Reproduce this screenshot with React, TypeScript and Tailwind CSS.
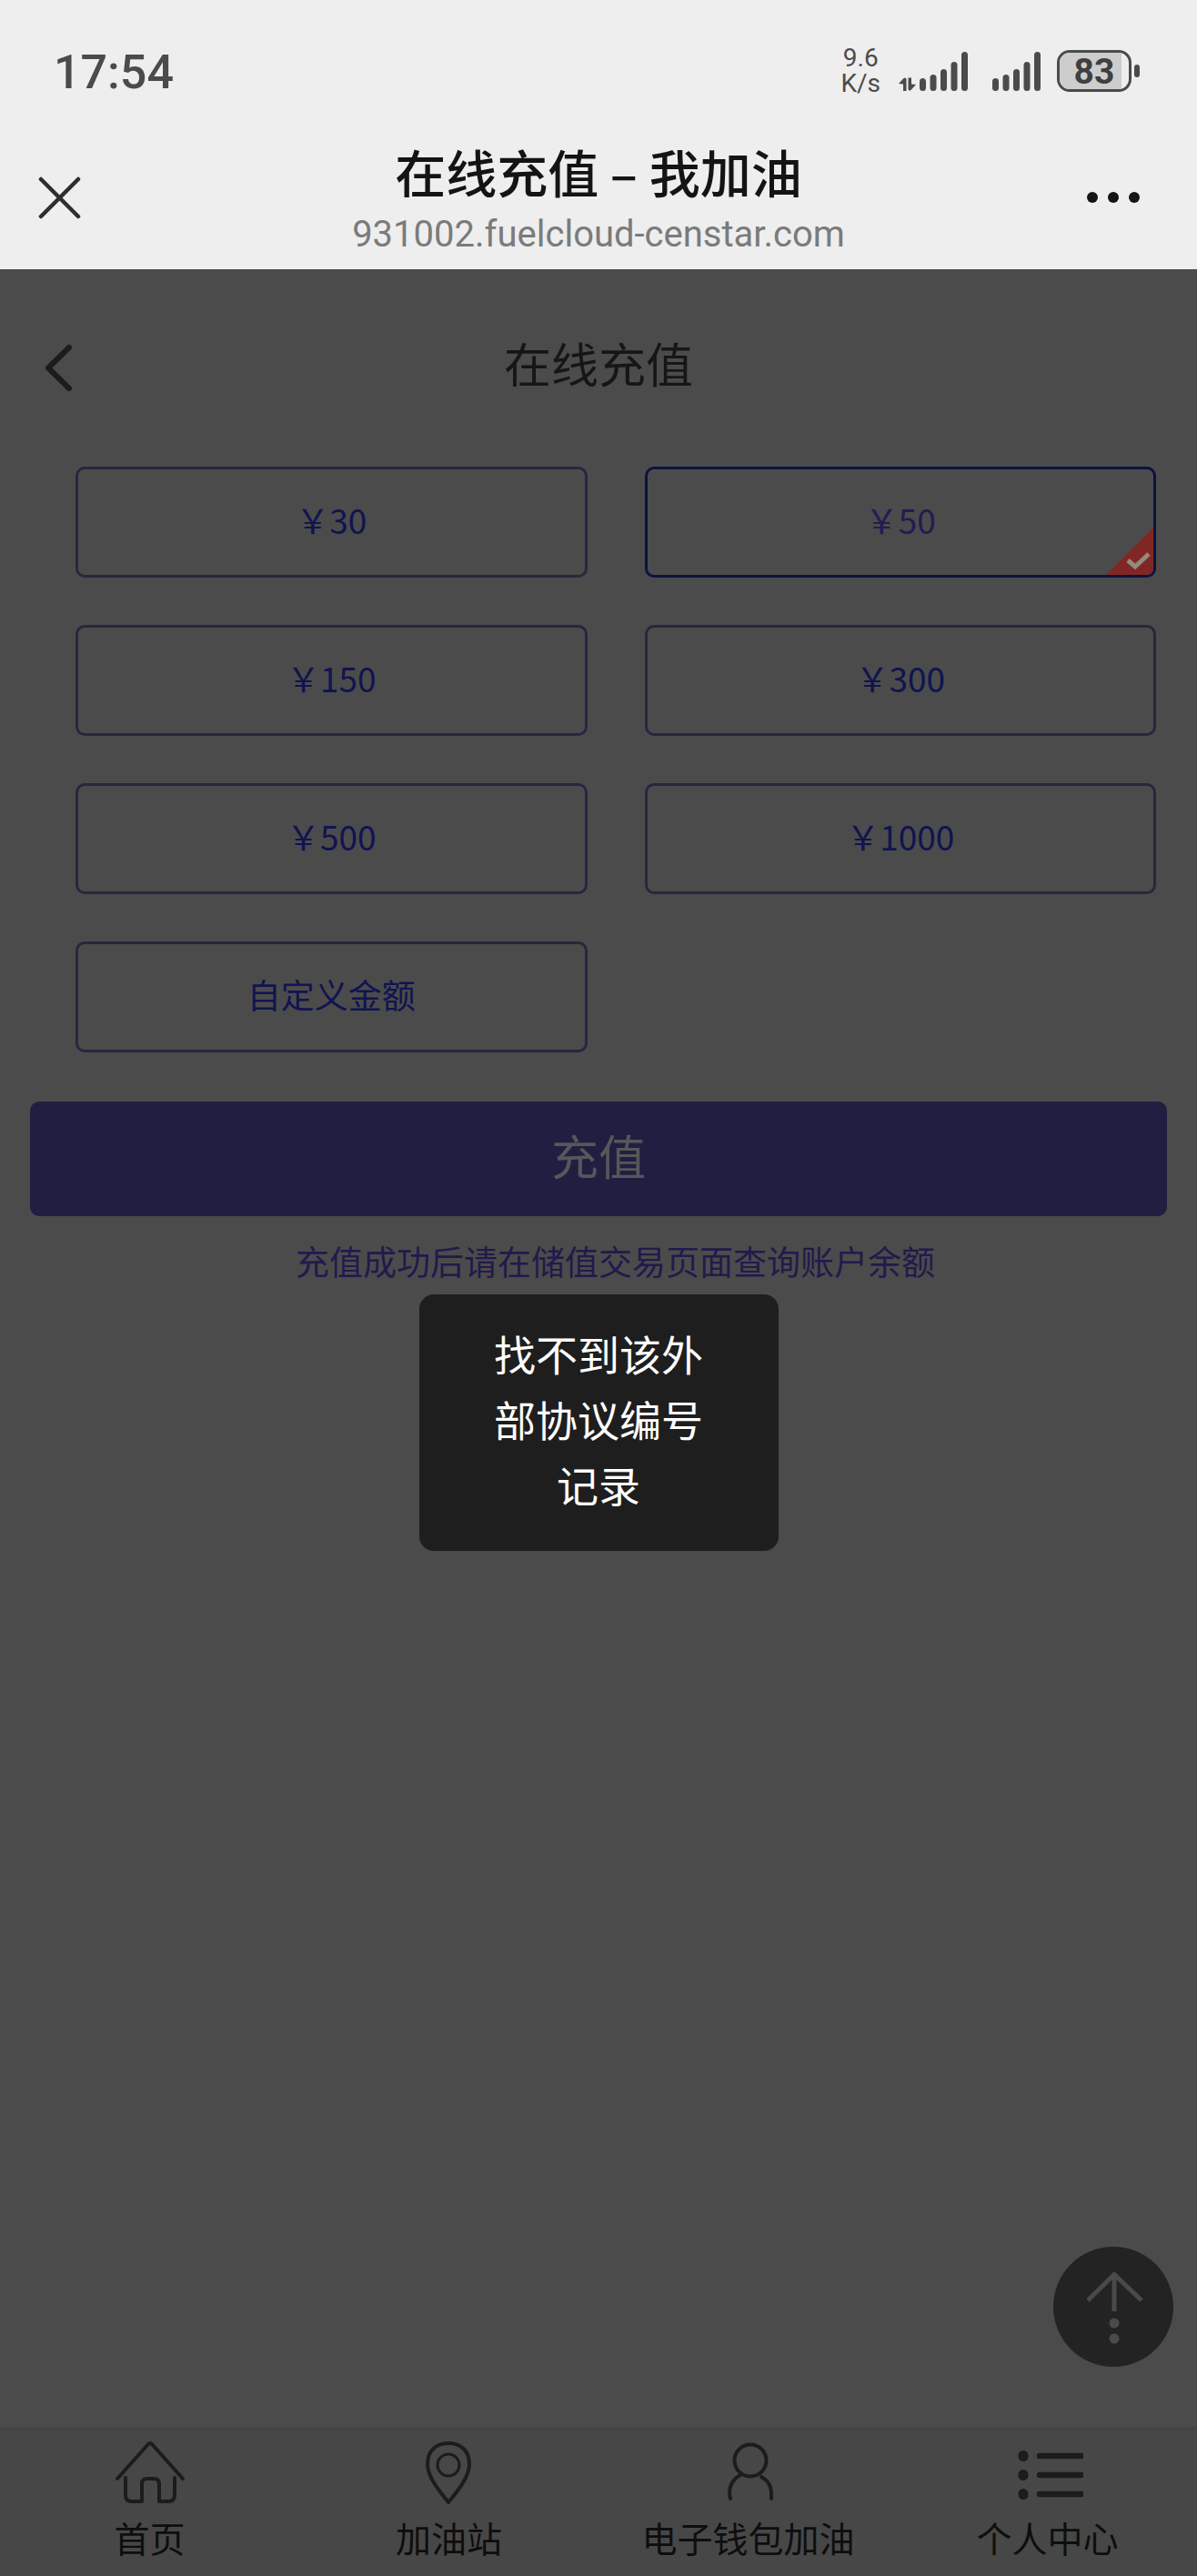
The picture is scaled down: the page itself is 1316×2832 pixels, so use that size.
import { useState } from 'react';
import clsx from 'clsx';

const amounts = ['￥30', '￥50', '￥150', '￥300', '￥500', '￥1000', '自定义金额'];

function SignalBars({ data = false }: { data?: boolean }) {
	return (
		<svg className={clsx('h-[43px]', data ? 'w-[76px]' : 'w-[53px]')} viewBox={data ? '-23 0 76 43' : '0 0 53 43'} fill="#4b4b4b">
			{data && (
				<>
					<path d="M-23 35 L-17.500 29 Q-15 27.500 -14.500 30 V43 H-18 V35.500 z" />
					<path d="M-4 36 L-9.500 42 Q-12 43.500 -12.500 41 V28.500 H-9 V35.500 z" />
				</>
			)}
			<rect x="0" y="29" width="7" height="14" rx="3.500" />
			<rect x="11.500" y="25" width="7" height="18" rx="3.500" />
			<rect x="23" y="19" width="7" height="24" rx="3.500" />
			<rect x="34.500" y="11" width="7" height="32" rx="3.500" />
			<rect x="46" y="0" width="7" height="43" rx="3.500" />
		</svg>
	);
}

function Battery({ level }: { level: number }) {
	return (
		<div className="flex items-center gap-[3px]">
			<div className="relative h-[46px] w-[82px] overflow-hidden rounded-[14px] border-[3px] border-[#4b4b4b]">
				<div className="h-full bg-[#cdcdcd]" style={{ width: `${level + 6}%` }} />
				<span className="absolute inset-0 flex items-center justify-center pt-0.5 text-[39px] font-bold leading-none text-[#3f3f3f]">
					{level}
				</span>
			</div>
			<div className="h-[14px] w-[6px] rounded-full bg-[#4b4b4b]" />
		</div>
	);
}

function StatusBar() {
	return (
		<div className="flex h-[156px] items-center justify-between pl-[59px] pr-[63px] font-['Roboto',sans-serif] text-[#4b4b4b]">
			<span className="pt-1 text-[52px] font-medium leading-none">17:54</span>
			<div className="flex items-center">
				<div className="mr-[20px] text-center text-[28px] leading-[28px]">
					<div>9.6</div>
					<div>K/s</div>
				</div>
				<SignalBars data />
				<div className="w-[27px]" />
				<SignalBars />
				<div className="w-[18px]" />
				<Battery level={83} />
			</div>
		</div>
	);
}

function BrowserHeader() {
	return (
		<header className="grid h-[140px] grid-cols-[1fr_auto_1fr] items-start pl-[42px] pr-[62px]">
			<button type="button" aria-label="关闭" className="mt-[38px] w-[54px]">
				<svg className="size-[47px]" viewBox="0 0 47 47" fill="none" stroke="#2e2e2e" strokeWidth="4.500" strokeLinecap="round">
					<path d="M3 3 L44 44 M44 3 L3 44" />
				</svg>
			</button>
			<div className="pl-5 text-center">
				<h1 className="text-[56px] font-medium leading-[64px] text-[#141414]">在线充值 – 我加油</h1>
				<p className="pt-1.5 font-['Roboto',sans-serif] text-[40px] leading-[64px] text-[#7b7b7b]">931002.fuelcloud-censtar.com</p>
			</div>
			<button type="button" aria-label="更多" className="mt-[55px] w-[60px] justify-self-end">
				<svg className="h-[12px] w-[60px]" viewBox="0 0 60 12" fill="#141414">
					<circle cx="7" cy="6" r="6" />
					<circle cx="30" cy="6" r="6" />
					<circle cx="53" cy="6" r="6" />
				</svg>
			</button>
		</header>
	);
}

function CheckedCorner() {
	return (
		<svg className="absolute bottom-0 right-0 size-[52px]" viewBox="0 0 52 52">
			<path d="M52 0 V52 H0 z" fill="#802725" />
			<path d="M24 36 L32 43 L47 29" fill="none" stroke="#94897c" strokeWidth="5" />
		</svg>
	);
}

const iconProps = {
	fill: 'none',
	stroke: '#1c1c1c',
	strokeWidth: 4,
	strokeLinecap: 'round',
	strokeLinejoin: 'round',
} as const;

const tabs = [
	{
		label: '首页',
		icon: (
			<svg className="h-[72px] w-[78px]" viewBox="0 0 78 72" {...iconProps}>
				<path d="M3 43 L37 5 Q39 3 41 5 L75 43" />
				<path d="M12 42 V61 Q12 68 19 68 H30 V49 Q30 43 36 43 H43 Q49 43 49 49 V68 H59 Q66 68 66 61 V42" />
			</svg>
		),
	},
	{
		label: '加油站',
		icon: (
			<svg className="h-[72px] w-[78px]" viewBox="0 0 78 72" {...iconProps}>
				<path d="M38 69 C32 61 15 43 15 27 C15 11 26 4 38 4 C50 4 61 11 61 27 C61 43 44 61 38 69 z" />
				<circle cx="38" cy="28" r="12" strokeWidth="3" />
			</svg>
		),
	},
	{
		label: '电子钱包加油',
		icon: (
			<svg className="h-[72px] w-[78px]" viewBox="0 0 78 72" {...iconProps}>
				<ellipse cx="41" cy="23" rx="17.500" ry="17.500" />
				<path d="M30 39 C22 43 18 51 18 58 Q18 62 19 65 M53 41 C60 45 64 51 64 58 V65" />
			</svg>
		),
	},
	{
		label: '个人中心',
		icon: (
			<svg className="h-[72px] w-[78px]" viewBox="0 0 78 72" {...iconProps} strokeWidth="6.500">
				<path d="M30 18 H76 M30 39 H76 M30 60 H76" />
				<path d="M12 17.500 V18.500 M12 38.500 V39.500 M12 59.500 V60.500" strokeWidth="11" />
			</svg>
		),
	},
];

function TabBar() {
	return (
		<nav className="flex h-[164px] border-t-4 border-[#444444] bg-[#474747] pt-[10px]">
			{tabs.map((tab) => (
				<a key={tab.label} href="#" className="flex flex-1 flex-col items-center gap-2">
					{tab.icon}
					<span className="text-[39px] leading-[54px] text-[#0e0e0e]">{tab.label}</span>
				</a>
			))}
		</nav>
	);
}

export default function App() {
	const [selected, setSelected] = useState('￥50');

	return (
		<div
			lang="zh-CN"
			className="flex min-h-screen flex-col bg-[#eeeeee] font-['Noto_Sans_CJK_SC',sans-serif]"
		>
			<StatusBar />
			<BrowserHeader />

			<div className="relative flex flex-1 flex-col bg-[#4b4b4b]">
				<main className="flex-1">
					<div className="grid h-[217px] grid-cols-[1fr_auto_1fr] items-center px-12">
						<button type="button" aria-label="返回" className="w-8">
							<svg className="h-[54px] w-[32px]" viewBox="0 0 32 54" fill="none" stroke="#1c1c1c" strokeWidth="6" strokeLinecap="round" strokeLinejoin="round">
								<path d="M28 4 L5 26.500 L28 49" />
							</svg>
						</button>
						<h2 className="pb-3 text-[52px] leading-[72px] text-[#161616]">在线充值</h2>
					</div>

					<div className="grid grid-cols-2 gap-x-[63px] gap-y-[52px] pl-[83px] pr-[45px]">
						{amounts.map((amount) => (
							<button
								key={amount}
								type="button"
								aria-pressed={amount === selected}
								onClick={() => setSelected(amount)}
								className={clsx(
									'relative h-[122px] overflow-hidden rounded-[10px] border-[3px] pb-1 text-[37px]',
									amount === selected ? 'border-[#0e123f] text-[#251a55]' : 'border-[#28263f] text-[#101450]',
								)}
							>
								{amount}
								{amount === selected && <CheckedCorner />}
							</button>
						))}
					</div>

					<div className="px-[33px] pt-[54px]">
						<button type="button" className="h-[126px] w-full rounded-[10px] bg-[#201f41] pb-2 text-[52px] text-[#54585a]">
							充值
						</button>
						<p className="pl-[37px] pt-[22px] text-center text-[37px] leading-[54px] text-[#211a4c]">
							充值成功后请在储值交易页面查询账户余额
						</p>
					</div>
				</main>

				<button
					type="button"
					aria-label="回到顶部"
					className="absolute bottom-[230px] right-[26px] flex size-[132px] items-center justify-center rounded-full bg-[#232323]"
				>
					<svg className="size-[132px]" viewBox="0 0 132 132" fill="none" stroke="#4a4a4a" strokeWidth="5">
						<path d="M38 59 L67 30.500 L97 59 M67 31 V71" />
						<circle cx="67" cy="84" r="5.500" fill="#4a4a4a" stroke="none" />
						<circle cx="67" cy="101" r="5.500" fill="#4a4a4a" stroke="none" />
					</svg>
				</button>

				<TabBar />

				<div className="pointer-events-none absolute inset-0 flex items-center justify-center">
					<div
						role="alert"
						className="w-[395px] rounded-[16px] bg-[#1e1e1e] px-20 pb-[38px] pt-7 text-center text-[46px] leading-[72px] text-white shadow-xs"
					>
						找不到该外部协议编号记录
					</div>
				</div>
			</div>
		</div>
	);
}
